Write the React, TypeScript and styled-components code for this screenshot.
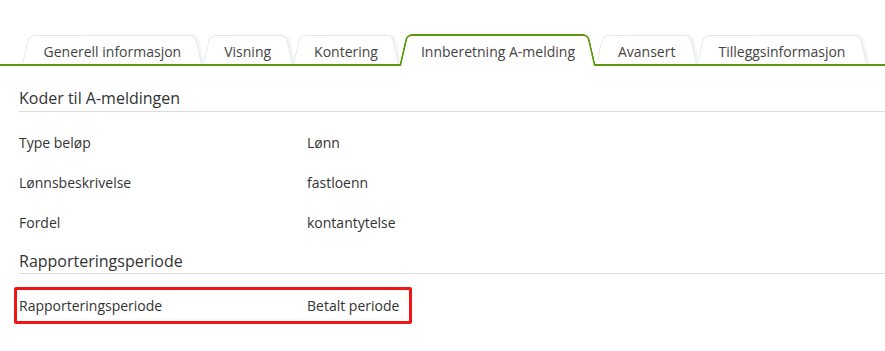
import styled, { createGlobalStyle } from "styled-components";

const GlobalStyle = createGlobalStyle`
  html, body {
    margin: 0;
    padding: 0;
    background: #fff;
    font-family: "Open Sans", "Liberation Sans", Arial, sans-serif;
  }
`;

const green = "#5a9a0a";

const Page = styled.div`
  width: 885px;
  height: 351px;
  overflow: hidden;
  background: #fff;
`;

const TabBar = styled.div`
  display: flex;
  align-items: flex-end;
  padding: 34px 0 0 22px;
  border-bottom: 2px solid ${green};
`;

const Tab = styled.div<{ $active?: boolean }>`
  position: relative;
  z-index: ${({ $active }) => ($active ? 5 : 1)};
  box-sizing: border-box;
  height: ${({ $active }) => ($active ? "32px" : "29px")};
  margin-bottom: ${({ $active }) => ($active ? "-2px" : "0")};
  padding: ${({ $active }) => ($active ? "4px 21.5px 2px" : "4px 21.5px 0")};
  display: flex;
  align-items: center;
  font-size: 14px;
  color: #444;
  white-space: nowrap;
  cursor: pointer;

  &::before,
  &::after {
    content: "";
    position: absolute;
    top: 0;
    bottom: 0;
    width: 60%;
    background: #fff;
    border: ${({ $active }) => ($active ? `2px solid ${green}` : "1px solid #e1e6ea")};
    border-bottom: none;
    z-index: -1;
    transform-origin: bottom;
    box-sizing: border-box;
  }

  &::before {
    left: 0;
    border-right: none;
    border-top-left-radius: 6px;
    transform: skewX(-13deg);
  }

  &::after {
    right: 0;
    border-left: none;
    border-top-right-radius: 6px;
    transform: skewX(13deg);
    box-shadow: ${({ $active }) => ($active ? "none" : "2px 0 3px rgba(120, 135, 150, 0.12)")};
  }
`;

const Content = styled.div`
  padding: 0 0 0 19px;
`;

const SectionTitle = styled.div<{ $first?: boolean }>`
  margin-top: ${({ $first }) => ($first ? "21px" : "8px")};
  padding-bottom: ${({ $first }) => ($first ? "2px" : "1px")};
  font-size: 16px;
  line-height: 22px;
  color: #333;
  border-bottom: 1px solid #dcdcdc;
`;

const Rows = styled.div`
  margin-top: 10px;
`;

const Row = styled.div`
  display: grid;
  grid-template-columns: 288px 1fr;
  align-items: center;
  height: 40px;
  font-size: 14px;
  color: #333;
`;

const HighlightRow = styled(Row)`
  box-sizing: border-box;
  width: 398px;
  height: 37px;
  margin: 13px 0 0 -5px;
  padding-left: 2px;
  border: 3px solid #f01414;
  border-radius: 2px;
`;

const tabs = [
  "Generell informasjon",
  "Visning",
  "Kontering",
  "Innberetning A-melding",
  "Avansert",
  "Tilleggsinformasjon",
];

const codes = [
  ["Type beløp", "Lønn"],
  ["Lønnsbeskrivelse", "fastloenn"],
  ["Fordel", "kontantytelse"],
];

export default function App() {
  return (
    <Page>
      <GlobalStyle />
      <TabBar>
        {tabs.map((t) => (
          <Tab key={t} $active={t === "Innberetning A-melding"}>
            {t}
          </Tab>
        ))}
      </TabBar>
      <Content>
        <SectionTitle $first>Koder til A-meldingen</SectionTitle>
        <Rows>
          {codes.map(([label, value]) => (
            <Row key={label}>
              <span>{label}</span>
              <span>{value}</span>
            </Row>
          ))}
        </Rows>
        <SectionTitle>Rapporteringsperiode</SectionTitle>
        <HighlightRow>
          <span>Rapporteringsperiode</span>
          <span>Betalt periode</span>
        </HighlightRow>
      </Content>
    </Page>
  );
}
